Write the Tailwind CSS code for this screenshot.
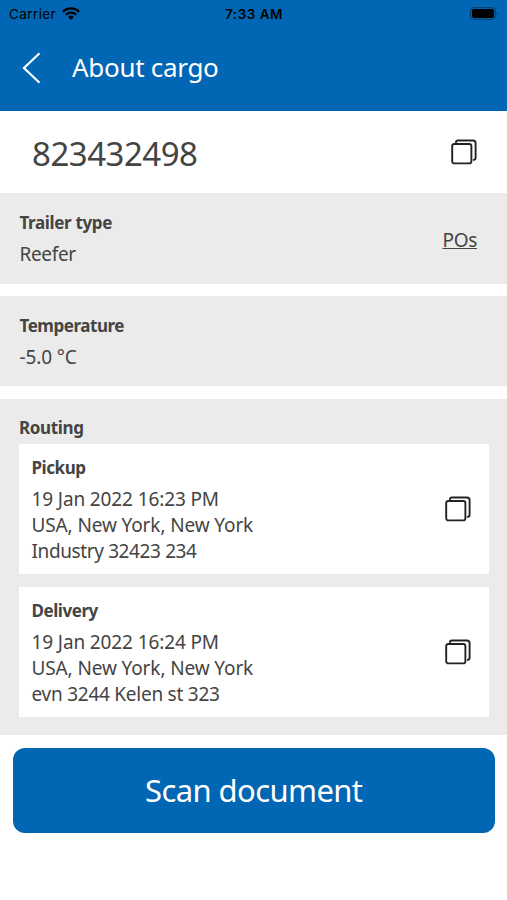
<!DOCTYPE html>
<html lang="en">
<head>
  <meta charset="UTF-8" />
  <meta name="viewport" content="width=device-width, initial-scale=1.0" />
  <title>About cargo</title>
  <script src="https://cdn.jsdelivr.net/npm/@tailwindcss/browser@4"></script>
</head>
<body class="bg-white text-[#444] font-['Noto_Sans',sans-serif] text-[19px] leading-[26px] tracking-[-0.12px] h-[900px] overflow-hidden">
  <svg class="hidden">
    <symbol id="copy" viewBox="0 0 26 26">
      <rect x="1.2" y="5" width="19.2" height="19.4" rx="2.2" fill="none" stroke="currentColor" stroke-width="1.9" />
      <path d="M5 3.2Q5 1.500 6.800 1.500H22a2.600 2.600 0 0 1 2.600 2.600V18.800q0 1.900-1.800 2.100" fill="none" stroke="currentColor" stroke-width="1.9" stroke-linecap="round" />
    </symbol>
  </svg>

  <header class="bg-[#0166b3] h-[110.5px]">
    <div class="grid grid-cols-3 items-center h-7 pl-[9px] pr-[8px] text-black font-[Inter,sans-serif] text-[13.5px] leading-7">
      <div class="flex items-center gap-[6px]">
        <span class="tracking-[0.4px]">Carrier</span>
        <svg class="w-[18px] h-[13px] -mt-[2px]" viewBox="0 0 18 13" fill="none" stroke="currentColor" stroke-width="2.3">
          <path d="M.9 4.7a11.5 11.5 0 0 1 16.2 0M3.8 7.7a7.4 7.4 0 0 1 10.4 0" />
          <path d="M9 13 6.1 10a4.1 4.1 0 0 1 5.8 0Z" fill="currentColor" stroke="none" />
        </svg>
      </div>
      <span class="text-center font-semibold tracking-[0.5px]">7:33 AM</span>
      <svg class="justify-self-end w-[29px] h-[13px] -mt-[2px]" viewBox="0 0 29 13">
        <rect x=".6" y=".6" width="24.8" height="11.8" rx="3.4" fill="none" stroke="#000" stroke-opacity=".4" />
        <rect x="2" y="2" width="22" height="9" rx="2" />
        <path d="M27 4.5q2 2 0 4Z" fill-opacity=".4" />
      </svg>
    </div>
    <div class="flex items-center h-20 pl-[22px] text-white">
      <svg class="w-[19px] h-8" viewBox="0 0 19 32" fill="none" stroke="currentColor" stroke-width="2.2"><path d="M17.5 1.2 2 16l15.5 14.8" /></svg>
      <h1 class="ml-[31px] text-[26px] tracking-[-0.3px] -mt-[2px]">About cargo</h1>
    </div>
  </header>

  <main>
    <section class="flex items-center justify-between h-[82.5px] pl-8 pr-[30px]">
      <span class="pt-[5px] text-[33px] tracking-[-0.5px]">823432498</span>
      <svg class="size-[26px] text-[#222]"><use href="#copy" /></svg>
    </section>

    <section class="flex items-center justify-between h-[90.5px] pl-[19.5px] pr-[30px] bg-[#ebebeb]">
      <div class="flex flex-col gap-[5px]">
        <h2 class="text-[17px] font-bold tracking-[-0.35px]">Trailer type</h2>
        <p class="tracking-[-0.35px]">Reefer</p>
      </div>
      <a href="#" class="pt-1 underline tracking-[-0.3px]">POs</a>
    </section>

    <section class="flex flex-col justify-center gap-[5px] mt-3 h-[90.5px] pl-[19.5px] pt-px bg-[#ebebeb]">
      <h2 class="text-[17px] font-bold tracking-[-0.45px]">Temperature</h2>
      <p>-5.0 °C</p>
    </section>

    <section class="mt-[12.5px] h-[336.5px] pt-4 pl-[19px] pr-[18px] bg-[#ebebeb]">
      <h2 class="text-[17px] font-bold tracking-[-0.35px]">Routing</h2>
      <div class="flex items-center justify-between mt-[3.5px] h-[130px] pl-[12.5px] pr-[18px] bg-white">
        <div>
          <h3 class="mb-[5px] text-[17px] font-bold tracking-[-0.45px]">Pickup</h3>
          <p>19 Jan 2022 16:23 PM</p>
          <p>USA, New York, New York</p>
          <p class="tracking-[-0.38px]">Industry 32423 234</p>
        </div>
        <svg class="size-[26px] text-[#222]"><use href="#copy" /></svg>
      </div>
      <div class="flex items-center justify-between mt-[12.5px] h-[130px] pl-[12.5px] pr-[18px] bg-white">
        <div class="pt-px">
          <h3 class="mb-[5px] text-[17px] font-bold tracking-[-0.45px]">Delivery</h3>
          <p>19 Jan 2022 16:24 PM</p>
          <p>USA, New York, New York</p>
          <p class="tracking-[-0.25px]">evn 3244 Kelen st 323</p>
        </div>
        <svg class="size-[26px] text-[#222]"><use href="#copy" /></svg>
      </div>
    </section>
  </main>

  <button class="block mt-[12.5px] ml-[13px] w-[481.5px] h-[85px] rounded-xl bg-[#0166b3] text-white text-[31px] tracking-[-0.6px]">Scan document</button>
</body>
</html>
